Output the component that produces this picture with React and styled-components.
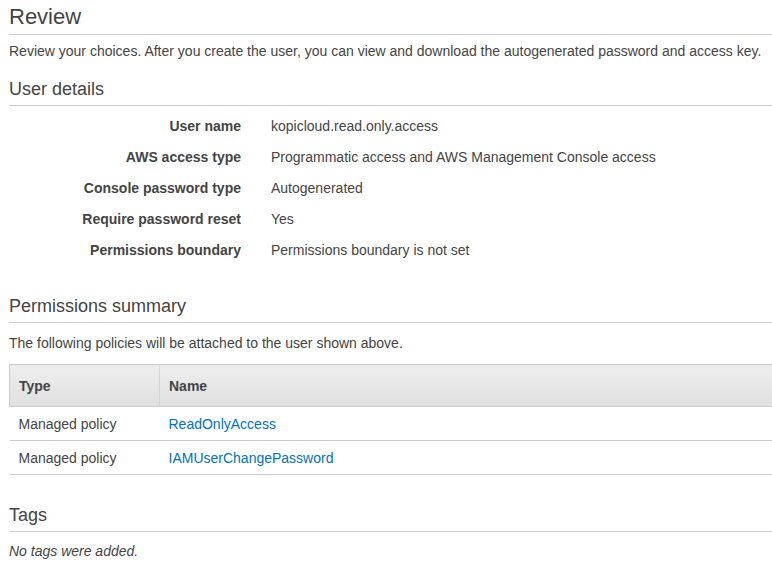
import React from "react";
import styled, { createGlobalStyle } from "styled-components";

const GlobalStyle = createGlobalStyle`
  html, body {
    margin: 0;
    padding: 0;
    background: #fff;
  }
  body {
    font-family: "Liberation Sans", Arial, sans-serif;
    font-size: 14px;
    color: #444;
  }
`;

const Page = styled.div`
  padding: 4px 0 0 9px;
`;

const Title = styled.h1`
  margin: 0;
  font-size: 22px;
  font-weight: normal;
  color: #444;
  line-height: 26px;
  padding-bottom: 4px;
  border-bottom: 1px solid #ccc;
`;

const SectionTitle = styled.h2`
  margin: ${(p) => p.$top}px 0 0;
  font-size: 18px;
  font-weight: normal;
  color: #444;
  line-height: 22px;
  padding-bottom: 5px;
  border-bottom: 1px solid #ccc;
`;

const Text = styled.p`
  margin: 0;
  padding-top: ${(p) => p.$top || 7}px;
  line-height: 16px;
  font-style: ${(p) => (p.$italic ? "italic" : "normal")};
`;

const Details = styled.dl`
  display: grid;
  grid-template-columns: 232px 1fr;
  column-gap: 30px;
  row-gap: 15px;
  margin: 0;
  padding-top: 12px;
  line-height: 16px;
`;

const Label = styled.dt`
  text-align: right;
  font-weight: bold;
`;

const Value = styled.dd`
  margin: 0;
`;

const Table = styled.table`
  width: 100%;
  margin-top: 13px;
  border-collapse: collapse;
  border-top: 1px solid #ccc;
`;

const Th = styled.th`
  text-align: left;
  font-weight: bold;
  height: 41px;
  padding: 0 9px;
  background: linear-gradient(#eeeeee, #e0e0e0);
  border-bottom: 1px solid #ccc;
  border-left: ${(p) => (p.$first ? "1px solid #ccc" : "1px solid #d4d4d4")};
  width: ${(p) => (p.$first ? "131px" : "auto")};
`;

const Td = styled.td`
  height: 33px;
  padding: 0 9px;
  border-bottom: 1px solid #ccc;
`;

const Link = styled.a`
  color: #0073bb;
  text-decoration: none;
`;

const details = [
  ["User name", "kopicloud.read.only.access"],
  ["AWS access type", "Programmatic access and AWS Management Console access"],
  ["Console password type", "Autogenerated"],
  ["Require password reset", "Yes"],
  ["Permissions boundary", "Permissions boundary is not set"],
];

const policies = ["ReadOnlyAccess", "IAMUserChangePassword"];

export default function App() {
  return (
    <>
      <GlobalStyle />
      <Page>
        <Title>Review</Title>
        <Text $top={8}>
          Review your choices. After you create the user, you can view and download the autogenerated password and access key.
        </Text>

        <SectionTitle $top={19}>User details</SectionTitle>
        <Details>
          {details.map(([k, v]) => (
            <React.Fragment key={k}>
              <Label>{k}</Label>
              <Value>{v}</Value>
            </React.Fragment>
          ))}
        </Details>

        <SectionTitle $top={37}>Permissions summary</SectionTitle>
        <Text $top={12}>The following policies will be attached to the user shown above.</Text>
        <Table>
          <thead>
            <tr>
              <Th $first>Type</Th>
              <Th>Name</Th>
            </tr>
          </thead>
          <tbody>
            {policies.map((p) => (
              <tr key={p}>
                <Td>Managed policy</Td>
                <Td>
                  <Link href="#">{p}</Link>
                </Td>
              </tr>
            ))}
          </tbody>
        </Table>

        <SectionTitle $top={29}>Tags</SectionTitle>
        <Text $top={11} $italic>No tags were added.</Text>
      </Page>
    </>
  );
}
